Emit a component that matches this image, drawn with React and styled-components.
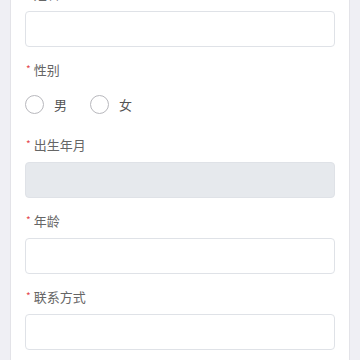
import styled, { createGlobalStyle } from 'styled-components'

const GlobalStyle = createGlobalStyle`
  html, body {
    margin: 0;
    padding: 0;
    background: #efeff4;
    overflow: hidden;
  }
  body {
    font-family: "Noto Sans CJK SC", "Noto Sans", sans-serif;
  }
`

const Page = styled.div`
  height: 360px;
  overflow: hidden;
  background: #efeff4;
`

const Card = styled.div`
  margin: -16px 10px 0;
  padding: 0 14px 20px;
  background: #fff;
  border-left: 1px solid #e3e3e8;
  border-right: 1px solid #e3e3e8;
`

const Field = styled.div`
  margin-bottom: 13px;
`

const Label = styled.div`
  height: 20px;
  margin-bottom: 7px;
  display: flex;
  align-items: center;
  font-size: 13px;
  color: #666;
  line-height: 20px;
`

const Star = styled.span`
  color: #e5484d;
  font-size: 10px;
  margin-right: 3px;
  margin-left: 1px;
  position: relative;
  top: -1px;
`

const Input = styled.div`
  box-sizing: border-box;
  height: 36px;
  border: 1px solid #dfe2e7;
  border-radius: 4px;
  background: ${p => (p.$disabled ? '#e6e9ed' : '#fff')};
`

const RadioRow = styled.div`
  height: 35px;
  display: flex;
  align-items: center;
  gap: 23px;
`

const RadioItem = styled.label`
  display: flex;
  align-items: center;
  font-size: 13px;
  color: #555;
`

const Circle = styled.span`
  box-sizing: border-box;
  width: 19px;
  height: 19px;
  border-radius: 50%;
  border: 1px solid #b8b8bd;
  margin-right: 10px;
`

function FormField ({ label, disabled }) {
  return (
    <Field>
      <Label><Star>*</Star>{label}</Label>
      <Input $disabled={disabled} />
    </Field>
  )
}

export default function App () {
  return (
    <Page>
      <GlobalStyle />
      <Card>
        <FormField label='姓名' />
        <Field>
          <Label><Star>*</Star>性别</Label>
          <RadioRow>
            <RadioItem><Circle />男</RadioItem>
            <RadioItem><Circle />女</RadioItem>
          </RadioRow>
        </Field>
        <FormField label='出生年月' disabled />
        <FormField label='年龄' />
        <FormField label='联系方式' />
      </Card>
    </Page>
  )
}
